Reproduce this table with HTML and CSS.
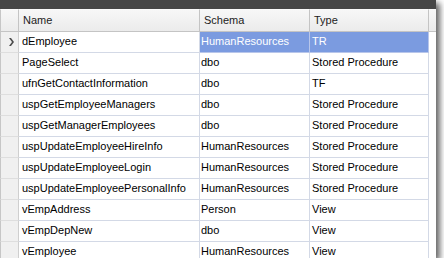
FILE: index.html
```html
<!DOCTYPE html>
<html lang="en">
<head>
  <meta charset="UTF-8" />
  <title>Objects</title>
  <link rel="stylesheet" href="styles.css">
</head>
<body>
  <div class="frame">
    <div class="titlebar"></div>

    <div class="grid">
      <div class="row head">
        <div class="cell rh"></div>
        <div class="cell name">Name</div>
        <div class="cell schema">Schema</div>
        <div class="cell type">Type</div>
        <div class="cell fill"></div>
      </div>

      <div class="row">
        <div class="cell rh">
          <svg class="arrow" viewBox="0 0 5 8" width="5" height="8">
            <path d="M0 0h2l3 4-3 4H0l3-4z" />
          </svg>
        </div>
        <div class="cell name">dEmployee</div>
        <div class="cell schema sel">HumanResources</div>
        <div class="cell type sel">TR</div>
        <div class="cell fill"></div>
      </div>

      <div class="row">
        <div class="cell rh"></div>
        <div class="cell name">PageSelect</div>
        <div class="cell schema">dbo</div>
        <div class="cell type">Stored Procedure</div>
        <div class="cell fill"></div>
      </div>

      <div class="row">
        <div class="cell rh"></div>
        <div class="cell name">ufnGetContactInformation</div>
        <div class="cell schema">dbo</div>
        <div class="cell type">TF</div>
        <div class="cell fill"></div>
      </div>

      <div class="row">
        <div class="cell rh"></div>
        <div class="cell name">uspGetEmployeeManagers</div>
        <div class="cell schema">dbo</div>
        <div class="cell type">Stored Procedure</div>
        <div class="cell fill"></div>
      </div>

      <div class="row">
        <div class="cell rh"></div>
        <div class="cell name">uspGetManagerEmployees</div>
        <div class="cell schema">dbo</div>
        <div class="cell type">Stored Procedure</div>
        <div class="cell fill"></div>
      </div>

      <div class="row">
        <div class="cell rh"></div>
        <div class="cell name">uspUpdateEmployeeHireInfo</div>
        <div class="cell schema">HumanResources</div>
        <div class="cell type">Stored Procedure</div>
        <div class="cell fill"></div>
      </div>

      <div class="row">
        <div class="cell rh"></div>
        <div class="cell name">uspUpdateEmployeeLogin</div>
        <div class="cell schema">HumanResources</div>
        <div class="cell type">Stored Procedure</div>
        <div class="cell fill"></div>
      </div>

      <div class="row">
        <div class="cell rh"></div>
        <div class="cell name">uspUpdateEmployeePersonalInfo</div>
        <div class="cell schema">HumanResources</div>
        <div class="cell type">Stored Procedure</div>
        <div class="cell fill"></div>
      </div>

      <div class="row">
        <div class="cell rh"></div>
        <div class="cell name">vEmpAddress</div>
        <div class="cell schema">Person</div>
        <div class="cell type">View</div>
        <div class="cell fill"></div>
      </div>

      <div class="row">
        <div class="cell rh"></div>
        <div class="cell name">vEmpDepNew</div>
        <div class="cell schema">dbo</div>
        <div class="cell type">View</div>
        <div class="cell fill"></div>
      </div>

      <div class="row">
        <div class="cell rh"></div>
        <div class="cell name">vEmployee</div>
        <div class="cell schema">HumanResources</div>
        <div class="cell type">View</div>
        <div class="cell fill"></div>
      </div>
    </div>
  </div>
</body>
</html>
```

FILE: styles.css
```css
* { box-sizing: border-box; }

body {
  margin: 0;
  background: #ffffff;
  font-family: "Liberation Sans", Tahoma, sans-serif;
  font-size: 11px;
  color: #000;
}

/* window frame with the drop shadow */
.frame {
  width: 436px;
  height: 258px;
  overflow: hidden;
  display: flex;
  flex-direction: column;
  background: #fff;
  box-shadow: 4px 3px 6px rgba(0, 0, 0, 0.6);
}

.titlebar {
  flex: none;
  height: 9px;
  background: #464646;
}

.grid {
  flex: 1;
  overflow: hidden;
}

.row {
  display: grid;
  grid-template-columns: 19px 181px 110px 119px 1fr;
  height: 21px;
}

.cell {
  height: 100%;
  padding-left: 3px;
  line-height: 19px;
  white-space: nowrap;
  overflow: hidden;
  border-right: 1px solid #d3d9e6;
  border-bottom: 1px solid #d3d9e6;
}

.cell.schema { padding-left: 1px; }
.cell.type { padding-left: 2px; }

.cell.fill {
  border-right: none;
  border-bottom: none;
}

/* row header column */
.rh {
  display: flex;
  align-items: center;
  padding-left: 8px;
  background: #f0f0f0;
  border-left: 1px solid #c6c6c6;
  border-right-color: #cfcfcf;
  border-bottom-color: #dedede;
}

.arrow { fill: #4a4a4a; }

/* column headers */
.row.head { height: 23px; }

.head .cell {
  line-height: 21px;
  padding-left: 4px;
  color: #222;
  background: linear-gradient(#f7f7f7, #ebebeb);
  border-top: 1px solid #fafafa;
  border-right-color: #c4c4c4;
  border-bottom-color: #c4c4c4;
}

.head .cell.fill {
  border-bottom: 1px solid #c4c4c4;
}

.head .rh { border-left: 1px solid #c6c6c6; }

/* selected cells */
.cell.sel {
  background: #7b9be0;
  color: #fff;
  border-right-color: #b8c6ea;
  border-bottom-color: #b8c6ea;
}
```
